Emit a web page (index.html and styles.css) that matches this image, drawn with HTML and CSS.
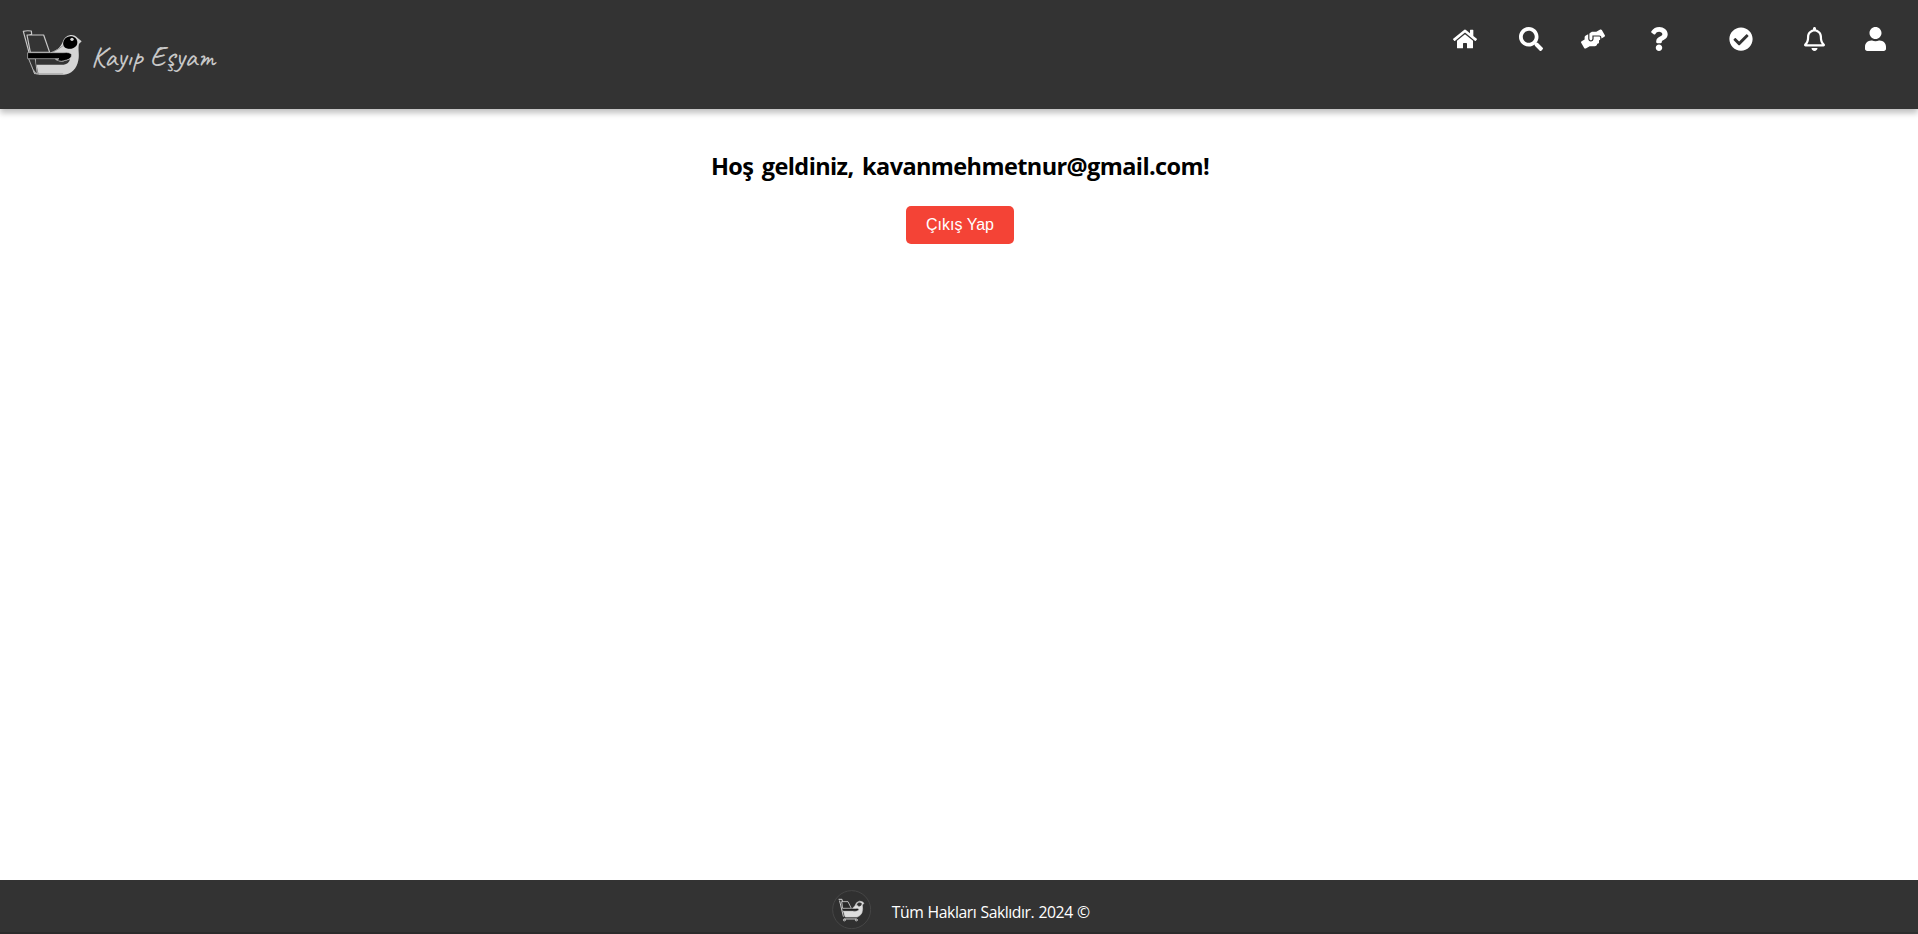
FILE: index.html
```html
<!DOCTYPE html>
<html lang="tr">
<head>
<meta charset="utf-8">
<title>Kayıp Eşyam</title>
<link rel="stylesheet" href="styles.css">
</head>
<body>
<header class="header">
  <a class="brand">
    <svg class="brand-bird" viewBox="60 54 190 150">
      <g stroke-linejoin="round" stroke-linecap="round">
        <path d="M69 64 Q79 61 93 63 L94 73 L85 77 L110 190 L103 190 L73 79 Z" fill="#333" stroke="#c9c9c9" stroke-width="3.6"/>
        <path d="M80 75 H130 L148 127 H90 Z" fill="#343434" stroke="#c9c9c9" stroke-width="3.6"/>
        <path d="M86 146 H105 L111 191 H104 Z" fill="#333" stroke="#c9c9c9" stroke-width="2.5"/>
        <path d="M150 127 C174 122 183 108 189 91 C196 74 220 68 232 84 L244 94 L236 102 C232 117 238 132 234 151 C230 177 212 193 191 194 L116 194 Q111 184 109 162 L172 158 Z" fill="#d5d5d5"/>
        <path d="M107 149 H171 Q178 158 193 153 L209 148 Q206 162 190 164 H108 Z" fill="#343434"/>
        <path d="M83 128 H190 Q208 126 213 133 Q215 146 199 150 Q182 157 169 151 L176 146 H83 Z" fill="#000" stroke="#bcbcbc" stroke-width="2"/>
        <path d="M158 126 Q178 116 188 107 Q199 119 214 115" fill="none" stroke="#999" stroke-width="3"/>
        <path d="M189 105 C185 88 203 74 219 80 Q232 85 231 99 C229 116 205 121 193 112 Z" fill="#000"/>
        <circle cx="215" cy="88" r="5" fill="#d8d8d8"/>
        <path d="M101 183 Q104 192 116 192 H187" fill="none" stroke="#aaa" stroke-width="4"/>
      </g>
    </svg>
    <span class="brand-name">Kayıp Eşyam</span>
  </a>
  <nav class="nav">
    <a class="nav-home"><svg class="icon" viewBox="0 0 576 512"><path d="M280.37 148.26L96 300.11V464a16 16 0 0 0 16 16l112.06-.29a16 16 0 0 0 15.92-16V368a16 16 0 0 1 16-16h64a16 16 0 0 1 16 16v95.64a16 16 0 0 0 16 16.05L464 480a16 16 0 0 0 16-16V300L295.67 148.26a12.19 12.19 0 0 0-15.3 0zM571.6 251.47L488 182.56V44.05a12 12 0 0 0-12-12h-56a12 12 0 0 0-12 12v72.61L318.47 43a48 48 0 0 0-61 0L4.34 251.47a12 12 0 0 0-1.6 16.9l25.5 31A12 12 0 0 0 45.15 301l235.22-193.74a12.19 12.19 0 0 1 15.3 0L530.9 301a12 12 0 0 0 16.9-1.6l25.5-31a12 12 0 0 0-1.7-16.93z"/></svg></a>
    <a class="nav-search"><svg class="icon" viewBox="0 0 512 512"><path d="M505 442.7L405.3 343c-4.5-4.5-10.6-7-17-7H372c27.6-35.3 44-79.7 44-128C416 93.1 322.9 0 208 0S0 93.1 0 208s93.1 208 208 208c48.3 0 92.7-16.4 128-44v16.3c0 6.4 2.5 12.5 7 17l99.7 99.7c9.4 9.4 24.6 9.4 33.9 0l28.3-28.3c9.4-9.4 9.4-24.6.1-34zM208 336c-70.7 0-128-57.2-128-128 0-70.7 57.2-128 128-128 70.7 0 128 57.2 128 128 0 70.7-57.2 128-128 128z"/></svg></a>
    <a class="nav-help"><svg class="icon" viewBox="0 0 640 512"><path d="M488 192H336v56c0 39.7-32.3 72-72 72s-72-32.3-72-72V126.4l-64.9 39C107.8 176.9 96 197.8 96 220.2v47.3l-80 46.2C.7 322.5-4.6 342.1 4.3 357.4l80 138.6c8.8 15.3 28.4 20.5 43.7 11.7L231.4 448H368c35.3 0 64-28.7 64-64h16c17.7 0 32-14.3 32-32v-64h8c13.3 0 24-10.7 24-24v-48c0-13.3-10.7-24-24-24zm147.7-37.4L555.7 16C546.9.7 527.3-4.5 512 4.3L408.6 64H306.4c-12 0-23.7 3.4-33.9 9.7L239 94.6c-9.4 5.8-15 16.1-15 27.1V248c0 22.1 17.9 40 40 40s40-17.9 40-40v-88h184c30.9 0 56 25.1 56 56v28.5l80-46.2c15.3-8.9 20.5-28.4 11.7-43.7z"/></svg></a>
    <a class="nav-question"><svg class="icon" viewBox="0 0 384 512"><path d="M202.021 0C122.202 0 70.503 32.703 29.914 91.026c-7.363 10.58-5.093 25.086 5.178 32.874l43.138 32.709c10.373 7.865 25.132 6.026 33.253-4.148 25.049-31.381 43.63-49.449 82.757-49.449 30.764 0 68.816 19.799 68.816 49.631 0 22.552-18.617 34.134-48.993 51.164-35.423 19.86-82.299 44.576-82.299 106.405V320c0 13.255 10.745 24 24 24h72.471c13.255 0 24-10.745 24-24v-5.773c0-42.86 125.268-44.645 125.268-160.627C377.504 66.256 286.902 0 202.021 0zM192 373.459c-38.196 0-69.271 31.075-69.271 69.271 0 38.195 31.075 69.27 69.271 69.27s69.271-31.075 69.271-69.271-31.075-69.27-69.271-69.27z"/></svg></a>
    <a class="nav-check"><svg class="icon" viewBox="0 0 512 512"><path d="M504 256c0 136.967-111.033 248-248 248S8 392.967 8 256 119.033 8 256 8s248 111.033 248 248zM227.314 387.314l184-184c6.248-6.248 6.248-16.379 0-22.627l-22.627-22.627c-6.248-6.249-16.379-6.249-22.628 0L216 308.118l-70.059-70.059c-6.248-6.248-16.379-6.248-22.628 0l-22.627 22.627c-6.248 6.248-6.248 16.379 0 22.627l104 104c6.249 6.249 16.379 6.249 22.628.001z"/></svg></a>
    <a class="nav-bell"><svg class="icon" viewBox="0 0 448 512"><path d="M439.39 362.29c-19.32-20.76-55.47-51.99-55.47-154.29 0-77.7-54.48-139.9-127.94-155.16V32c0-17.67-14.32-32-31.98-32s-31.98 14.33-31.98 32v20.84C118.56 68.1 64.08 130.3 64.08 208c0 102.3-36.15 133.53-55.47 154.29-6 6.45-8.66 14.16-8.61 21.71.11 16.4 12.98 32 32.1 32h383.8c19.12 0 32-15.6 32.1-32 .05-7.55-2.61-15.27-8.61-21.71zM67.53 368c21.22-27.97 44.42-74.33 44.53-159.42 0-.2-.06-.38-.06-.58 0-61.86 50.14-112 112-112s112 50.14 112 112c0 .2-.06.38-.06.58.11 85.1 23.31 131.46 44.53 159.42H67.53zM224 512c35.32 0 63.97-28.65 63.97-64H160.03c0 35.35 28.65 64 63.97 64z"/></svg></a>
    <a class="nav-user"><svg class="icon" viewBox="0 0 448 512"><path d="M224 256c70.7 0 128-57.3 128-128S294.7 0 224 0 96 57.3 96 128s57.3 128 128 128zm89.6 32h-16.7c-22.2 10.2-46.9 16-72.9 16s-50.6-5.8-72.9-16h-16.7C60.2 288 0 348.2 0 422.4V464c0 26.5 21.5 48 48 48h352c26.5 0 48-21.5 48-48v-41.6c0-74.2-60.2-134.4-134.4-134.4z"/></svg></a>
  </nav>
</header>
<main class="main">
  <h2 class="welcome">Hoş geldiniz, kavanmehmetnur@gmail.com!</h2>
  <button class="logout">Çıkış Yap</button>
</main>
<footer class="footer">
  <svg class="footer-logo" viewBox="36 59 118 118">
    <circle cx="95" cy="118" r="57" fill="#303030" stroke="#505050" stroke-width="2"/>
    <g fill="none" stroke="#d0d0d0" stroke-linejoin="round" stroke-linecap="round">
      <path d="M57 87 L66 87 L76 138 M59 92 L70 138" stroke-width="3"/>
      <path d="M66 94 H84 L94 114 H69 Z" fill="#292929" stroke-width="2.5"/>
      <path d="M98 114 Q106 107 110 97 Q119 89 128 95 L132 99 L127 104 Q132 133 112 140 H76 L70 122 H99 Z" fill="#dedede" stroke-width="2"/>
      <path d="M66 115 H107 Q118 113 116 119 Q109 124 99 122 H70 Z" fill="#171717" stroke="#aaa" stroke-width="1.5"/>
      <path d="M111 104 Q113 94 124 99 Q126 106 117 108" fill="#333" stroke="#333" stroke-width="2"/>
      <path d="M74 146 H108" stroke-width="3"/>
      <circle cx="73" cy="149" r="3" stroke-width="2.5"/>
      <circle cx="109" cy="149" r="3" stroke-width="2.5"/>
    </g>
  </svg>
  <span class="copyright">Tüm Hakları Saklıdır. 2024 ©</span>
</footer>
</body>
</html>
```
FILE: styles.css
```css
* { box-sizing: border-box; }
body {
  margin: 0;
  height: 934px;
  display: flex;
  flex-direction: column;
  overflow: hidden;
  background: #fff;
  font-family: "Segoe UI", "Open Sans", "Noto Sans", sans-serif;
}
.header {
  height: 109px;
  flex: none;
  display: flex;
  justify-content: space-between;
  padding: 27px 32px 0 20px;
  background: #333;
  box-shadow: 0 4px 6px rgba(0, 0, 0, .25);
}
.brand { display: flex; align-items: flex-start; }
.brand-bird { width: 64px; height: 50px; margin-top: 1px; }
.brand-name {
  margin: 13px 0 0 7px;
  color: #c8c8c8;
  font: 400 29px/34px Caveat, Lato, sans-serif;
  white-space: nowrap;
}
.nav { display: flex; align-items: flex-start; }
.nav a { display: flex; }
.icon { width: 24px; height: 24px; fill: #fff; }
.nav-search { margin-left: 42px; }
.nav-help { margin-left: 38px; }
.nav-question { margin-left: 45px; }
.nav-question .icon { width: 18px; }
.nav-check { margin-left: 61px; }
.nav-bell { margin-left: 50.5px; }
.nav-user { margin-left: 40px; margin-right: .5px; }
.nav-bell .icon, .nav-user .icon { width: 21px; }
.main {
  flex: 1;
  display: flex;
  flex-direction: column;
  align-items: center;
  padding: 41px 0 0 2px;
}
.welcome {
  margin: 0 0 24px;
  color: #000;
  font-size: 23.5px;
  line-height: 32px;
  font-weight: 700;
  letter-spacing: -.6px;
  word-spacing: 3px;
  white-space: nowrap;
}
.logout {
  width: 108px;
  height: 38px;
  padding: 0;
  border: 0;
  border-radius: 5px;
  background: #f44336;
  color: #fff;
  font: 16px "Liberation Sans", Arial, sans-serif;
}
.footer {
  height: 54px;
  flex: none;
  display: flex;
  align-items: flex-start;
  padding: 9.5px 0 0 832px;
  background: #333;
  border-bottom: 2px solid #2b2b2b;
}
.footer-logo { width: 39.3px; height: 39.3px; }
.copyright {
  margin: 11px 0 0 20.5px;
  color: #fff;
  font-size: 15.75px;
  line-height: 22px;
  letter-spacing: -.45px;
  word-spacing: .6px;
  white-space: nowrap;
}
```
